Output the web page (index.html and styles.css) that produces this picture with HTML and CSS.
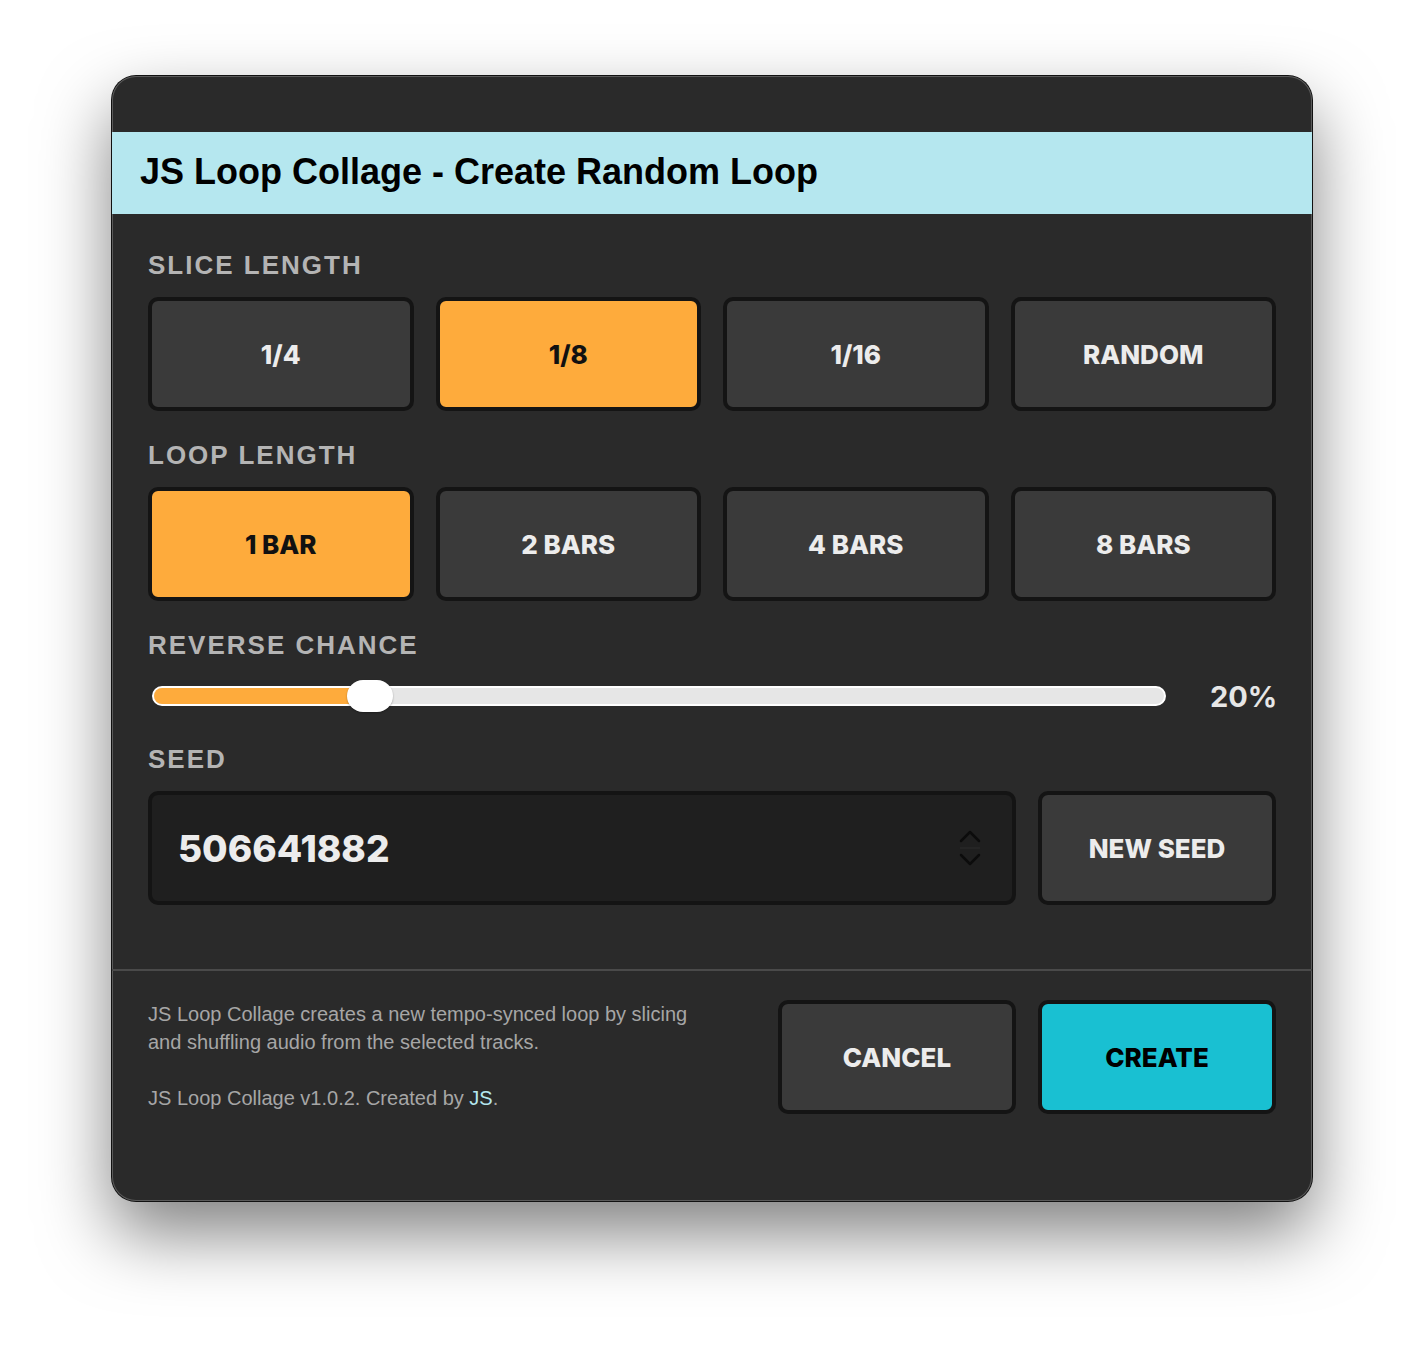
FILE: index.html
```html
<!DOCTYPE html>
<html lang="en">
<head>
    <meta charset="UTF-8">
    <meta name="viewport" content="width=device-width, initial-scale=1.0">
    <title>JS Loop Collage - Create Random Loop</title>
    <link rel="stylesheet" href="styles.css">
</head>
<body>

<div class="window">
    <div class="titlebar"></div>
    <h1 class="header">JS Loop Collage - Create Random Loop</h1>

    <div class="content">
        <div class="section">
            <div class="label">SLICE LENGTH</div>
            <div class="options">
                <button class="opt">1/4</button>
                <button class="opt active">1/8</button>
                <button class="opt">1/16</button>
                <button class="opt">RANDOM</button>
            </div>
        </div>

        <div class="section">
            <div class="label">LOOP LENGTH</div>
            <div class="options">
                <button class="opt active">1 BAR</button>
                <button class="opt">2 BARS</button>
                <button class="opt">4 BARS</button>
                <button class="opt">8 BARS</button>
            </div>
        </div>

        <div class="section">
            <div class="label">REVERSE CHANCE</div>
            <div class="slider-row">
                <div class="track">
                    <div class="fill" style="width: calc((100% - 46px) * 0.2 + 23px)"></div>
                    <div class="thumb" style="left: calc((100% - 46px) * 0.2)"></div>
                </div>
                <div class="value">20%</div>
            </div>
        </div>

        <div class="section">
            <div class="label">SEED</div>
            <div class="seed-row">
                <div class="seed-input">
                    <span>506641882</span>
                    <svg class="spin" width="22" height="36" viewBox="0 0 22 36">
                        <path d="M2 11 L11 2 L20 11" fill="none" stroke="#0c0c0c" stroke-width="2.5" stroke-linecap="round" stroke-linejoin="round"/>
                        <path d="M2 25 L11 34 L20 25" fill="none" stroke="#0c0c0c" stroke-width="2.5" stroke-linecap="round" stroke-linejoin="round"/>
                        <line x1="1" y1="18" x2="21" y2="18" stroke="#2c2c2c" stroke-width="1"/>
                    </svg>
                </div>
                <button class="btn">NEW SEED</button>
            </div>
        </div>
    </div>

    <div class="footer">
        <div class="about">
            <p>JS Loop Collage creates a new tempo-synced loop by slicing<br>and shuffling audio from the selected tracks.</p>
            <p>JS Loop Collage v1.0.2. Created by <a href="#">JS</a>.</p>
        </div>
        <div class="actions">
            <button class="btn">CANCEL</button>
            <button class="btn create">CREATE</button>
        </div>
    </div>
</div>

</body>
</html>
```

FILE: styles.css
```css
body {
    margin: 0;
    min-height: 1350px;
    background-color: #fff;
    font-family: "Liberation Sans", Arial, sans-serif;
}
.window {
    width: 1200px;
    margin: 76px auto 0;
    background-color: #2a2a2a;
    border-radius: 24px;
    overflow: hidden;
    box-shadow: 0 0 0 1px #111, inset 0 0 0 1px #5a5a5a, 0 32px 70px rgba(0, 0, 0, 0.5);
}
.titlebar {
    height: 56px;
}
.header {
    margin: 0;
    height: 82px;
    line-height: 80px;
    padding-left: 28px;
    background-color: #b5e7ef;
    color: #000;
    font-size: 36px;
    font-weight: bold;
}
.content {
    padding: 36px 36px 0;
}
.section {
    margin-bottom: 29px;
}
.label {
    font-size: 26px;
    line-height: 30px;
    font-weight: bold;
    letter-spacing: 2px;
    color: #b4b4b4;
    margin-bottom: 17px;
}
.options {
    display: grid;
    grid-template-columns: repeat(4, 1fr);
    gap: 22px;
}
.opt, .btn {
    height: 114px;
    border: 4px solid #141414;
    border-radius: 10px;
    background-color: #3a3a3a;
    color: #ececec;
    font-family: Inter, "Liberation Sans", sans-serif;
    font-size: 26px;
    font-weight: 800;
    cursor: pointer;
}
.opt.active {
    background-color: #feab3c;
    color: #111;
}
.slider-row {
    display: flex;
    align-items: center;
    height: 38px;
    gap: 44px;
}
.track {
    position: relative;
    flex: 1;
    height: 16px;
    margin-left: 4px;
    background-color: #e6e6e6;
    border: 2px solid #fff;
    border-radius: 10px;
}
.fill {
    height: 100%;
    background-color: #feab3c;
    border-radius: 10px 0 0 10px;
}
.thumb {
    position: absolute;
    top: 50%;
    width: 46px;
    height: 32px;
    margin-top: -16px;
    background-color: #fff;
    border-radius: 16px;
    box-shadow: 0 1px 2px rgba(0, 0, 0, 0.3);
}
.value {
    flex-shrink: 0;
    width: 66px;
    font-family: Inter, "Liberation Sans", sans-serif;
    font-size: 29px;
    font-weight: 700;
    color: #e6e6e6;
}
.seed-row {
    display: flex;
    gap: 22px;
}
.seed-input {
    flex: 1;
    height: 114px;
    box-sizing: border-box;
    display: flex;
    align-items: center;
    justify-content: space-between;
    padding: 0 31px 0 26px;
    background-color: #1f1f1f;
    border: 4px solid #141414;
    border-radius: 10px;
    font-family: Inter, "Liberation Sans", sans-serif;
    font-size: 37px;
    font-weight: 800;
    color: #ececec;
}
.seed-row .btn {
    width: 238px;
}
.footer {
    margin-top: 64px;
    border-top: 2px solid #4a4a4a;
    padding: 29px 36px 87px;
    display: flex;
    justify-content: space-between;
}
.about p {
    margin: 0 0 28px;
    font-size: 20px;
    line-height: 28px;
    color: #a6a6a6;
}
.about p:last-child {
    margin-bottom: 0;
}
.about a {
    color: #b5e7ef;
    text-decoration: none;
}
.actions {
    display: flex;
    gap: 22px;
}
.actions .btn {
    width: 238px;
}
.btn.create {
    background-color: #19c0d2;
    color: #000;
}
```
